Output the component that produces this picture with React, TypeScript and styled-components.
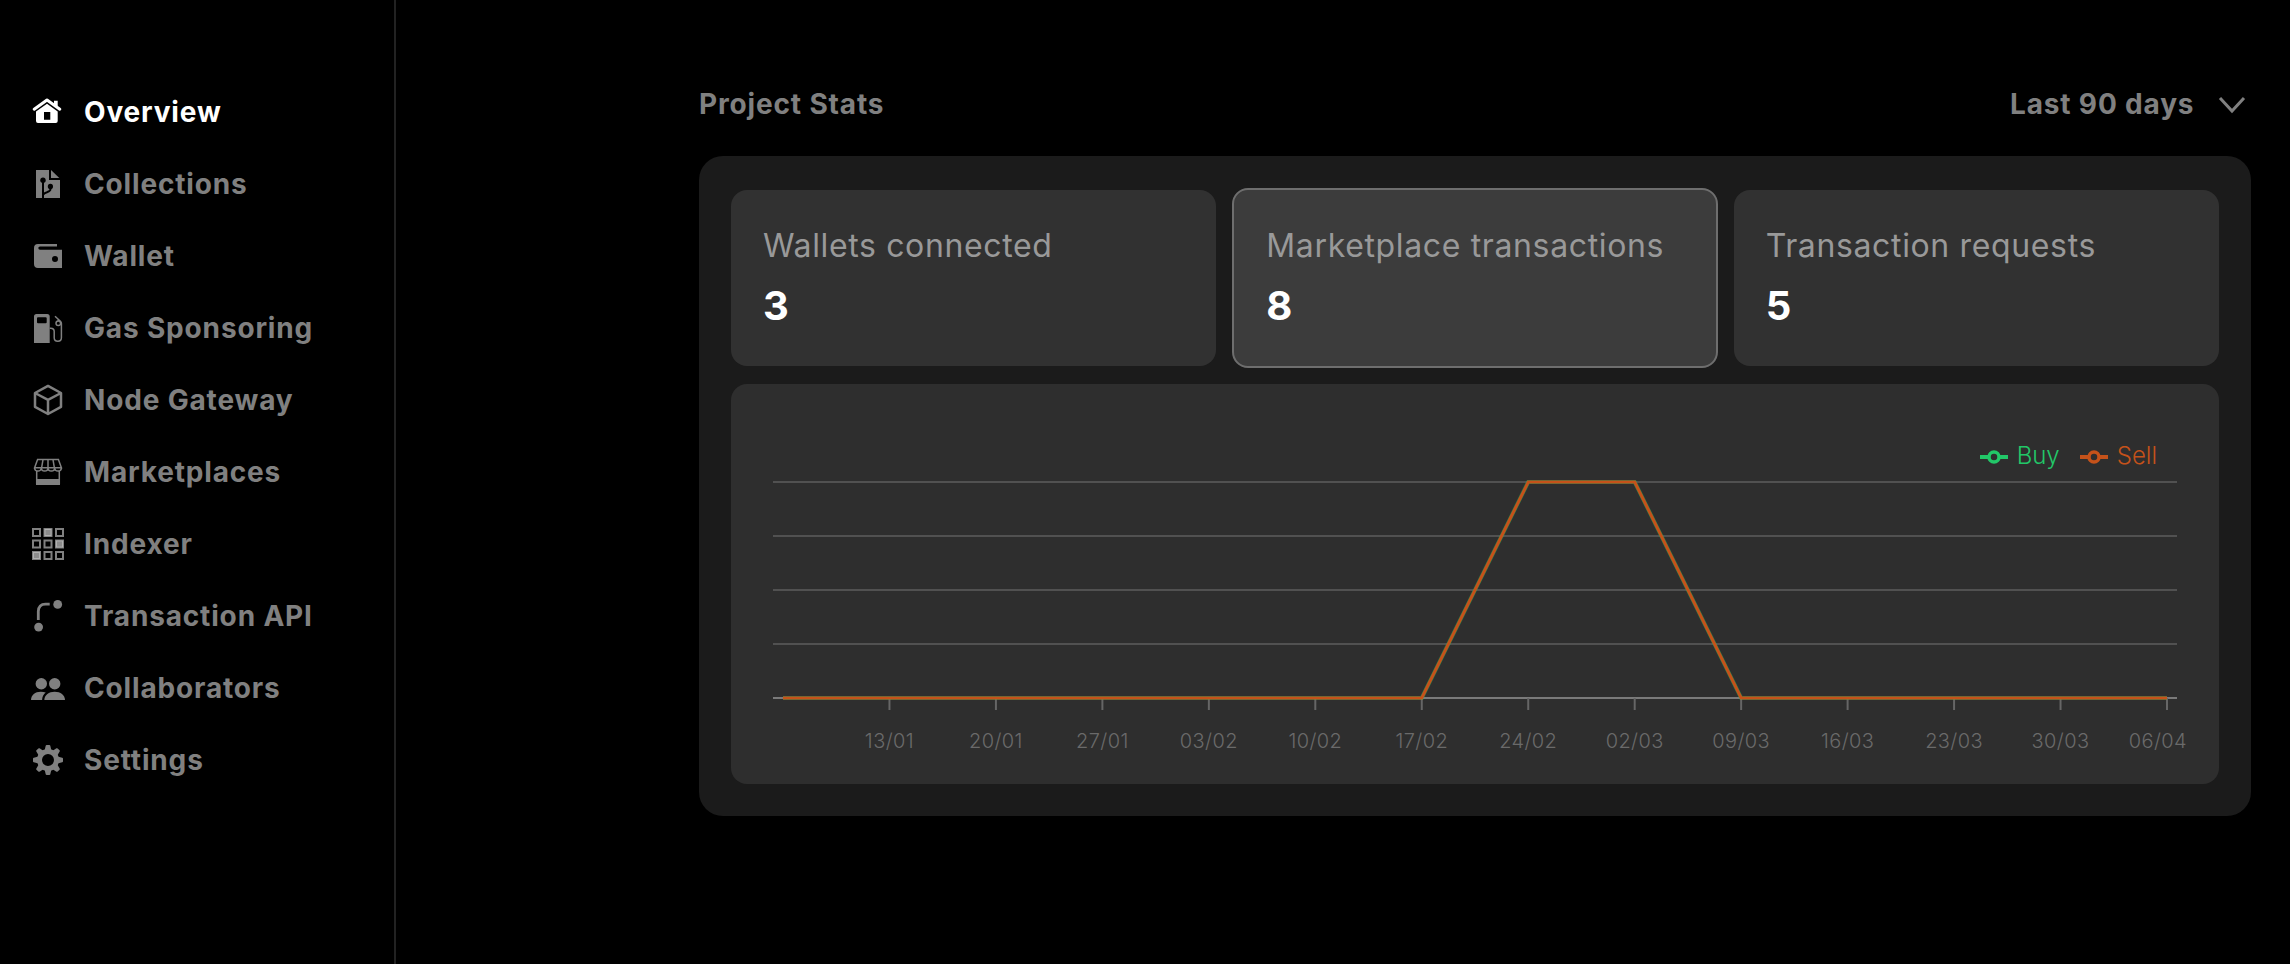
import React, { useLayoutEffect, useRef, useState } from "react";
import styled, { createGlobalStyle } from "styled-components";

const GlobalStyle = createGlobalStyle`
  * { box-sizing: border-box; }
  html, body { margin: 0; background: #000; }
  body {
    font-family: Inter, "Liberation Sans", sans-serif;
    letter-spacing: 0.02em;
  }
`;

const Layout = styled.div`
  display: flex;
  min-height: 100vh;
  background: #000;
`;

const Sidebar = styled.nav`
  flex: 0 0 396px;
  padding: 96px 32px;
  border-right: 2px solid #222;
`;

const NavList = styled.ul`
  display: flex;
  flex-direction: column;
  gap: 40px;
  margin: 0;
  padding: 0;
  list-style: none;
`;

const NavLink = styled.a<{ $active?: boolean }>`
  display: flex;
  align-items: center;
  gap: 20px;
  height: 32px;
  color: ${(p) => (p.$active ? "#fff" : "#808080")};
  font-size: 28px;
  font-weight: 700;
  line-height: 32px;
  letter-spacing: 0.03em;
  text-decoration: none;
`;

const NavIcon = styled.svg`
  flex: none;
  width: 32px;
  height: 32px;
  overflow: visible;
`;

const Main = styled.main`
  flex: 1;
  min-width: 0;
  padding: 84px 39px 84px 303px;
`;

const Header = styled.header`
  display: flex;
  align-items: center;
  justify-content: space-between;
  height: 40px;
  margin-bottom: 32px;
`;

const Title = styled.h1`
  margin: 0;
  color: #808080;
  font-size: 28px;
  font-weight: 700;
  line-height: 40px;
  letter-spacing: 0.03em;
`;

const PeriodField = styled.label`
  position: relative;
  display: flex;
  align-items: center;
  color: #808080;
`;

const PeriodSelect = styled.select`
  appearance: none;
  margin: 0;
  padding: 0 56px 0 0;
  border: 0;
  background: transparent;
  color: inherit;
  font-family: inherit;
  font-size: 28px;
  font-weight: 700;
  line-height: 40px;
  letter-spacing: 0.03em;
`;

const Chevron = styled.svg`
  position: absolute;
  right: 3px;
  width: 32px;
  height: 32px;
  pointer-events: none;
`;

const Panel = styled.section`
  display: flex;
  flex-direction: column;
  gap: 16px;
  padding: 32px;
  border-radius: 24px;
  background: #1b1b1b;
`;

const StatRow = styled.div`
  display: grid;
  grid-template-columns: repeat(3, 1fr);
  align-items: center;
  gap: 16px;
`;

const StatCard = styled.button<{ $active?: boolean }>`
  display: flex;
  flex-direction: column;
  gap: 8px;
  padding: 32px;
  border: ${(p) => (p.$active ? "2px solid #6e6e6e" : "0")};
  border-radius: 16px;
  background: ${(p) => (p.$active ? "#3c3c3c" : "#313131")};
  font-family: inherit;
  text-align: left;
`;

const StatLabel = styled.span`
  color: #999;
  font-size: 32px;
  line-height: 48px;
  letter-spacing: 0.02em;
`;

const StatValue = styled.span`
  color: #fff;
  font-size: 40px;
  font-weight: 700;
  line-height: 56px;
`;

const ChartCard = styled.div`
  position: relative;
  height: 400px;
  border-radius: 16px;
  background: #2e2e2e;
`;

const ChartSvg = styled.svg`
  display: block;
  width: 100%;
  height: 400px;
`;

const Legend = styled.ul`
  position: absolute;
  top: 56px;
  right: 62px;
  display: flex;
  gap: 20px;
  margin: 0;
  padding: 0;
  list-style: none;
`;

const LegendItem = styled.li<{ $color: string }>`
  display: flex;
  align-items: center;
  gap: 9px;
  color: ${(p) => p.$color};
  font-size: 24px;
  font-weight: 300;
  line-height: 32px;
  letter-spacing: 0;
`;

const TickLabel = styled.text`
  fill: #6a6a6a;
  font-size: 20px;
  font-weight: 300;
  letter-spacing: 0.02em;
`;

const icons: Record<string, React.ReactNode> = {
  Overview: (
    <>
      <path d="M2.2 13.2 15 4l12.8 9.2" fill="none" stroke="currentColor" strokeWidth="3" strokeLinecap="round" strokeLinejoin="round" />
      <path d="M22 4.7h3.7v7L22 9z" fill="currentColor" />
      <path fillRule="evenodd" fill="currentColor" d="M15 7.8 25.7 15.6V25a2 2 0 0 1-2 2H6a2 2 0 0 1-2-2v-9.400zM12 16v7.7h6.3V16z" />
    </>
  ),
  Collections: (
    <>
      <path d="M4 2h13v10h11v18H12V14h-2v16H4z" fill="currentColor" />
      <path d="M19 2l8.3 8H19z" fill="currentColor" />
      <circle cx="11" cy="12.3" r="2.7" fill="#000" />
      <circle cx="18.4" cy="18.4" r="2.6" fill="#000" />
      <path d="M18.4 18v3.6c0 1.4-1.6 1.9-3.4 2.6-1.6.5-2.6 1-3.6 2" fill="none" stroke="#000" strokeWidth="2" />
    </>
  ),
  Wallet: (
    <path fillRule="evenodd" fill="currentColor" d="M25 4v2.400H8a1.700 1.700 0 0 0 0 3.400h22V28H6a4 4 0 0 1-4-4V8a4 4 0 0 1 4-4zM23 16a3 3 0 1 0 0 6 3 3 0 0 0 0-6z" />
  ),
  "Gas Sponsoring": (
    <>
      <path fillRule="evenodd" fill="currentColor" d="M4.500 2h10.700a2.500 2.500 0 0 1 2.500 2.500V31H2V4.500A2.500 2.500 0 0 1 4.500 2zM6 5.300a1 1 0 0 0-1 1v4a1 1 0 0 0 1 1h7.700a1 1 0 0 0 1-1v-4a1 1 0 0 0-1-1z" />
      <path fill="none" stroke="currentColor" strokeWidth="1.5" d="M17.700 16.200h1c2.200 0 3.500 1.200 3.500 3.300v6.300c0 2.200 1.500 3.500 3.600 3.500s3.600-1.400 3.600-3.500V11.600c0-1-.3-1.700-1-2.400L23 4.300M26.200 9v-2" />
      <circle cx="26.3" cy="11.3" r="2.3" fill="none" stroke="currentColor" strokeWidth="1.5" />
    </>
  ),
  "Node Gateway": (
    <path fill="none" stroke="currentColor" strokeWidth="2.5" strokeLinejoin="round" d="M16 1.900 29 9v13.800L16 30 3 22.800V9zM3 9l13 6.800L29 9M16 15.800V30" />
  ),
  Marketplaces: (
    <>
      <path
        fill="none"
        stroke="currentColor"
        strokeWidth="1.5"
        d="M5.600 3.600h20.800l3 8.200H2.600zM11 3.600l-1.400 8.200M16 3.600v8.200M21 3.600l1.400 8.200M2.600 11.800c0 4.400 6.700 4.400 6.700 0 0 4.400 6.700 4.400 6.700 0 0 4.400 6.700 4.400 6.700 0 0 4.400 6.700 4.400 6.700 0M4.700 15v13M27.300 15v13"
      />
      <path d="M4 23h24v6H4z" fill="currentColor" />
    </>
  ),
  Indexer: (
    <>
      {[0, 1, 2].map((row) =>
        [0, 1, 2].map((col) => {
          const filled = (row === 0 && col === 1) || (row === 1 && col === 2) || (row === 2 && col === 0);
          const x = col * 11.5;
          const y = row * 11.5;
          return (
            <g key={`${row}-${col}`}>
              <rect x={x + 1} y={y + 1} width="7" height="7" fill={filled ? "#8c8c8c" : "none"} stroke="currentColor" strokeWidth="2" />
              {filled && <rect x={x + 1.5} y={y + 1.5} width="6" height="6" fill="none" stroke="#b0b0b0" />}
            </g>
          );
        }),
      )}
    </>
  ),
  "Transaction API": (
    <>
      <circle cx="25.7" cy="4.4" r="4.4" fill="currentColor" />
      <circle cx="6.6" cy="27.1" r="4.4" fill="currentColor" />
      <path d="M6.300 20v-8.500c0-5 2.700-7.400 7.200-7.400h4.200" fill="none" stroke="currentColor" strokeWidth="2.8" />
    </>
  ),
  Collaborators: (
    <>
      <circle cx="9.3" cy="11.8" r="5.7" fill="currentColor" />
      <circle cx="22.7" cy="11.8" r="5.7" fill="currentColor" />
      <path d="M12.300 28c.2-5.200 4.500-8.300 10.400-8.300S32.800 22.800 33 28z" fill="currentColor" />
      <path d="M-1 28c.3-5.200 4-8.300 9.800-8.300 1.900 0 3.500.2 4.900.8-2.300 1.700-3.500 4.200-3.600 7.500z" fill="currentColor" />
    </>
  ),
  Settings: (
    <>
      <circle cx="16" cy="16" r="8.5" fill="none" stroke="currentColor" strokeWidth="5" />
      {[0, 45, 90, 135, 180, 225, 270, 315].map((angle) => (
        <path key={angle} d="M12.600 6.500 13.700 1.800a1 1 0 0 1 1-.8h2.600a1 1 0 0 1 1 .8l1.100 4.700z" fill="currentColor" transform={`rotate(${angle} 16 16)`} />
      ))}
    </>
  ),
};

const navItems = Object.keys(icons);

const stats = [
  { label: "Wallets connected", value: 3 },
  { label: "Marketplace transactions", value: 8 },
  { label: "Transaction requests", value: 5 },
];

const dates = ["13/01", "20/01", "27/01", "03/02", "10/02", "17/02", "24/02", "02/03", "09/03", "16/03", "23/03", "30/03", "06/04"];
const series = [0, 0, 0, 0, 0, 0, 0, 4, 4, 0, 0, 0, 0, 0];
const BUY = "#22c768";
const SELL = "#c5521a";

const gridInset = 42;
const plotInset = 52;
const axisY = 314;
const stepY = 54;

function Chart() {
  const ref = useRef<HTMLDivElement>(null);
  const [width, setWidth] = useState(1488);

  useLayoutEffect(() => {
    const node = ref.current;
    if (!node) return;
    const update = () => setWidth(node.clientWidth);
    update();
    const observer = new ResizeObserver(update);
    observer.observe(node);
    return () => observer.disconnect();
  }, []);

  const stepX = (width - plotInset * 2) / (series.length - 1);
  const x = (i: number) => plotInset + i * stepX;
  const points = series.map((v, i) => `${x(i)},${axisY - v * stepY}`).join(" ");

  return (
    <ChartCard ref={ref}>
      <Legend>
        {[
          { name: "Buy", color: BUY },
          { name: "Sell", color: SELL },
        ].map((item) => (
          <LegendItem key={item.name} $color={item.color}>
            <svg width="28" height="28" viewBox="0 0 28 28" fill="none" stroke="currentColor" aria-hidden="true">
              <path d="M0 15h9M19 15h9" strokeWidth="4" />
              <circle cx="14" cy="15" r="5" strokeWidth="3.5" />
            </svg>
            {item.name}
          </LegendItem>
        ))}
      </Legend>
      <ChartSvg role="img" aria-label="Marketplace transactions per week">
        {[1, 2, 3, 4].map((n) => (
          <line key={n} x1={gridInset} x2={width - gridInset} y1={axisY - n * stepY} y2={axisY - n * stepY} stroke="#515151" strokeWidth="2" />
        ))}
        <line x1={gridInset} x2={width - gridInset} y1={axisY} y2={axisY} stroke="#7a7a7a" strokeWidth="2" />
        {dates.map((date, i) => {
          const last = i === dates.length - 1;
          return (
            <g key={date}>
              <line x1={x(i + 1)} x2={x(i + 1)} y1={axisY} y2={axisY + 12} stroke="#666" strokeWidth="2" />
              <TickLabel x={last ? width - 32 : x(i + 1)} y={364} textAnchor={last ? "end" : "middle"}>
                {date}
              </TickLabel>
            </g>
          );
        })}
        <polyline points={points} fill="none" stroke={BUY} strokeOpacity="0.5" strokeWidth="4" />
        <polyline points={points} fill="none" stroke={SELL} strokeWidth="3" />
      </ChartSvg>
    </ChartCard>
  );
}

export default function App() {
  return (
    <Layout>
      <GlobalStyle />
      <Sidebar>
        <NavList>
          {navItems.map((name, i) => (
            <li key={name}>
              <NavLink href="#" $active={i === 0}>
                <NavIcon viewBox="0 0 32 32" aria-hidden="true">
                  {icons[name]}
                </NavIcon>
                {name}
              </NavLink>
            </li>
          ))}
        </NavList>
      </Sidebar>
      <Main>
        <Header>
          <Title>Project Stats</Title>
          <PeriodField>
            <PeriodSelect aria-label="Period" defaultValue="90">
              <option value="7">Last 7 days</option>
              <option value="30">Last 30 days</option>
              <option value="90">Last 90 days</option>
            </PeriodSelect>
            <Chevron viewBox="0 0 32 32" aria-hidden="true">
              <path d="M4 10l12 13 12-13" fill="none" stroke="currentColor" strokeWidth="3" />
            </Chevron>
          </PeriodField>
        </Header>
        <Panel>
          <StatRow>
            {stats.map((stat, i) => (
              <StatCard key={stat.label} type="button" $active={i === 1}>
                <StatLabel>{stat.label}</StatLabel>
                <StatValue>{stat.value}</StatValue>
              </StatCard>
            ))}
          </StatRow>
          <Chart />
        </Panel>
      </Main>
    </Layout>
  );
}
